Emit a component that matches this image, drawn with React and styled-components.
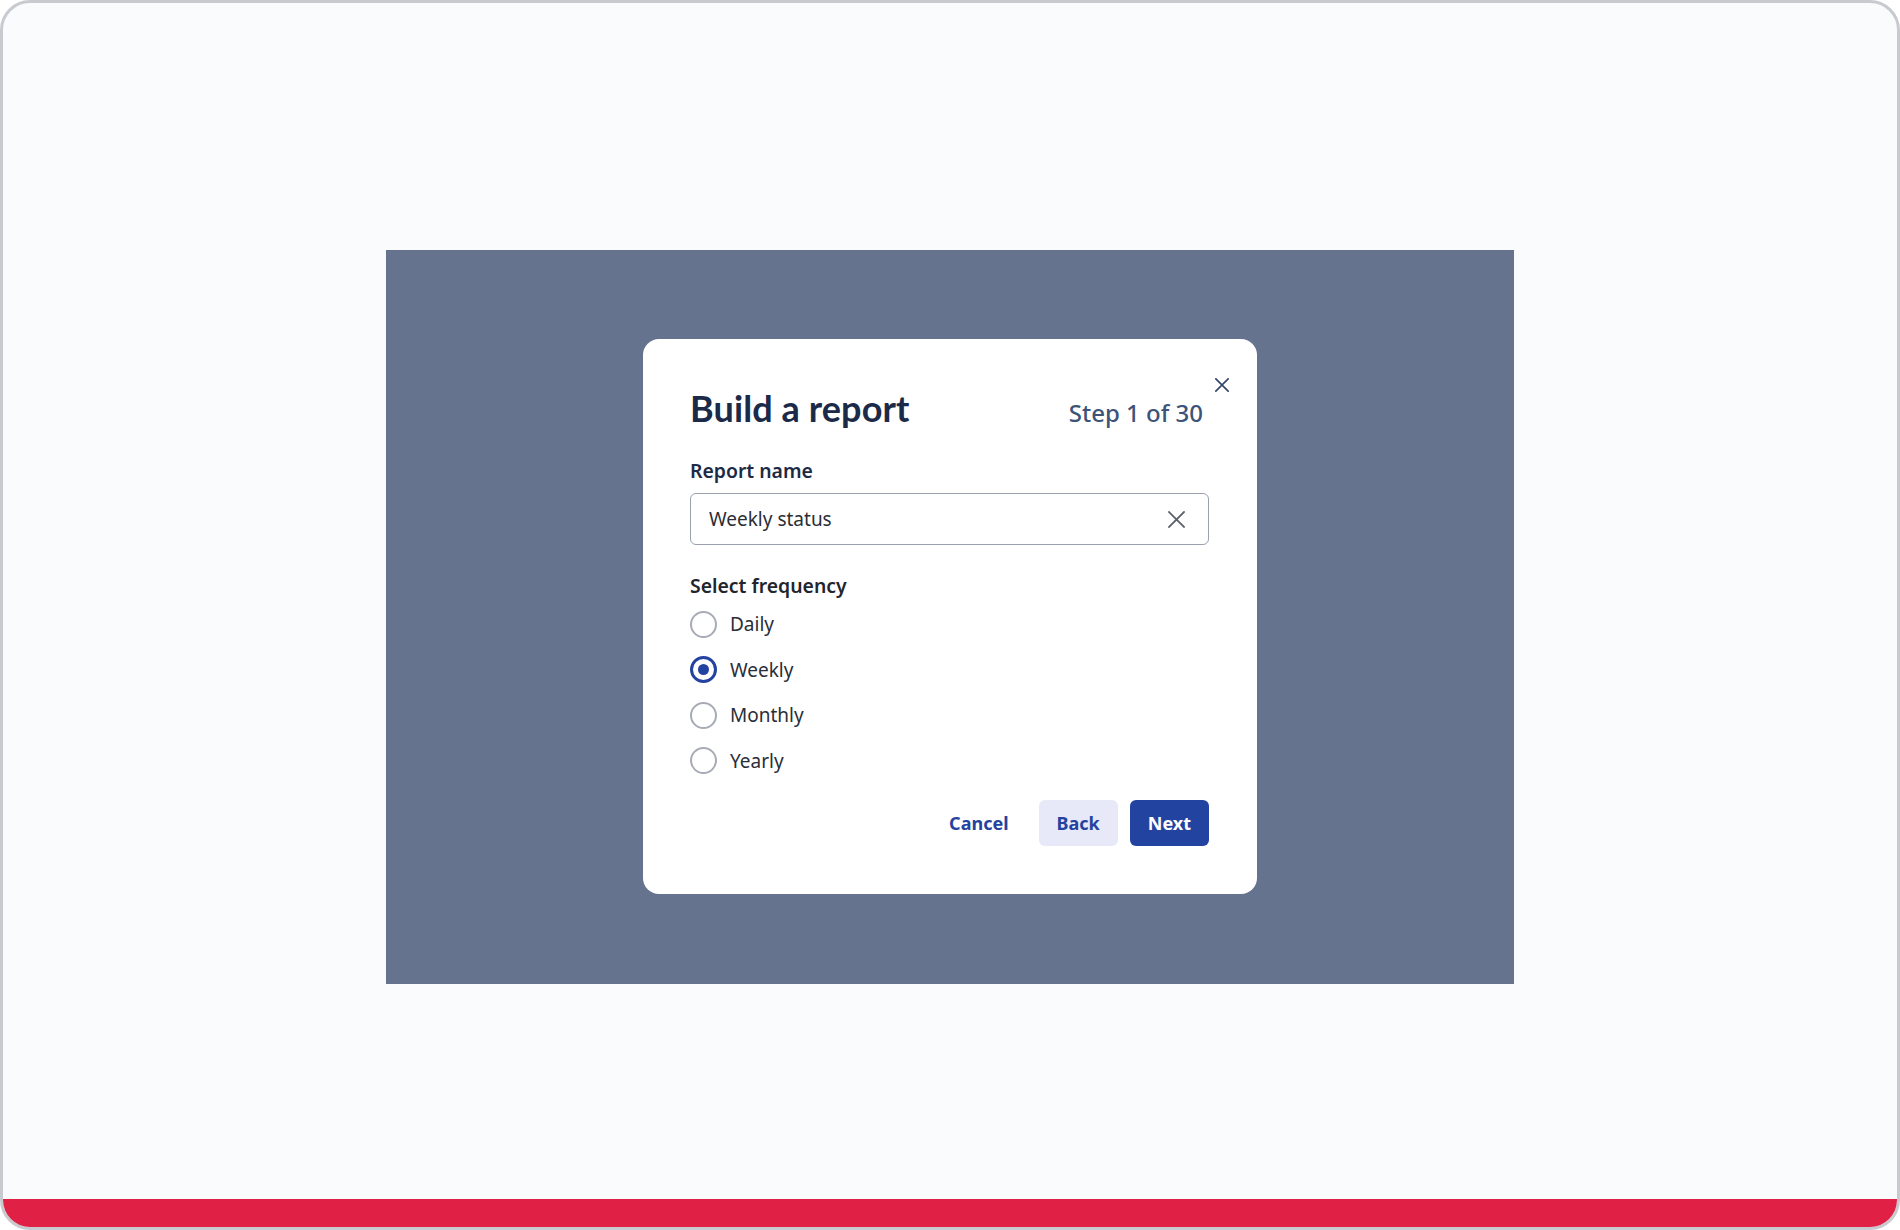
import React, { useState } from "react";
import styled, { createGlobalStyle } from "styled-components";

const GlobalStyle = createGlobalStyle`
  html, body {
    margin: 0;
    padding: 0;
    background: #ffffff;
  }
  * {
    box-sizing: border-box;
  }
`;

// outer device frame
const Frame = styled.div`
  width: 1900px;
  height: 1230px;
  border: 3px solid #c9cad0;
  border-radius: 30px;
  overflow: hidden;
  background: #fafbfd;
  display: flex;
  flex-direction: column;
`;

const Stage = styled.div`
  flex: 1;
  display: flex;
  justify-content: center;
  align-items: flex-start;
  padding-top: 247px;
`;

const BottomBar = styled.div`
  height: 28px;
  background: #e02045;
`;

const Backdrop = styled.div`
  width: 1128px;
  height: 734px;
  background: #65738f;
  display: flex;
  justify-content: center;
  align-items: flex-start;
  padding-top: 89px;
`;

const Dialog = styled.div`
  position: relative;
  width: 614px;
  background: #ffffff;
  border-radius: 16px;
  padding: 47px 48px 48px 47px;
  font-family: "Noto Sans", "Open Sans", sans-serif;
`;

const CloseButton = styled.button`
  position: absolute;
  top: 32px;
  right: 21px;
  width: 28px;
  height: 28px;
  border: none;
  background: transparent;
  padding: 0;
  display: flex;
  align-items: center;
  justify-content: center;
  cursor: pointer;
  color: #34466a;
`;

const Header = styled.div`
  display: flex;
  justify-content: space-between;
  align-items: baseline;
  height: 44px;
`;

const Title = styled.h2`
  margin: 0;
  font-family: Lato, "Noto Sans", sans-serif;
  font-weight: 700;
  font-size: 36px;
  line-height: 44px;
  color: #1b2a48;
  letter-spacing: 0.1px;
`;

const Step = styled.span`
  font-size: 24px;
  line-height: 32px;
  font-weight: 500;
  color: #3d5378;
  margin-right: 6px;
`;

const FieldLabel = styled.div`
  font-size: 19.4px;
  line-height: 24px;
  font-weight: 600;
  color: ${(p) => p.$tone || "#1d2a45"};
  margin-top: ${(p) => p.$top}px;
`;

const InputWrap = styled.div`
  margin-top: 10px;
  height: 52px;
  border: 1.5px solid #9aa0ac;
  border-radius: 6px;
  display: flex;
  align-items: center;
  padding: 0 18px 0 18px;
`;

const TextInput = styled.input`
  flex: 1;
  border: none;
  outline: none;
  background: transparent;
  font-family: "Noto Sans", sans-serif;
  font-size: 19px;
  color: #2b2e35;
  padding: 0;
`;

const ClearButton = styled.button`
  width: 28px;
  height: 28px;
  border: none;
  background: transparent;
  padding: 0;
  display: flex;
  align-items: center;
  justify-content: center;
  color: #5b5f69;
  cursor: pointer;
`;

const RadioList = styled.div`
  margin-top: 13px;
  display: flex;
  flex-direction: column;
  gap: 19.5px;
`;

const RadioRow = styled.label`
  display: flex;
  align-items: center;
  gap: 13px;
  height: 26px;
  cursor: pointer;
  font-size: 19px;
  color: #2a2e38;
`;

const RadioCircle = styled.span`
  width: 27px;
  height: 27px;
  border-radius: 50%;
  border: ${(p) => (p.$checked ? "3px solid #2443a0" : "2.5px solid #a7abb5")};
  display: flex;
  align-items: center;
  justify-content: center;

  &::after {
    content: "";
    width: 11px;
    height: 11px;
    border-radius: 50%;
    background: #2443a0;
    display: ${(p) => (p.$checked ? "block" : "none")};
  }
`;

const Footer = styled.div`
  margin-top: 26px;
  display: flex;
  justify-content: flex-end;
  gap: 12px;
`;

const Button = styled.button`
  height: 46px;
  padding: 0 18px;
  border-radius: 6px;
  border: none;
  font-family: "Noto Sans", sans-serif;
  font-weight: 700;
  font-size: 18px;
  cursor: pointer;
  background: ${(p) =>
    p.$variant === "primary" ? "#2243a0" : p.$variant === "secondary" ? "#e7e9f8" : "transparent"};
  color: ${(p) => (p.$variant === "primary" ? "#ffffff" : "#2443a0")};
`;

const options = ["Daily", "Weekly", "Monthly", "Yearly"];

function Cross({ size, weight }) {
  return (
    <svg width={size} height={size} viewBox="0 0 16 16" fill="none">
      <path d="M1 1L15 15M15 1L1 15" stroke="currentColor" strokeWidth={weight} strokeLinecap="square" />
    </svg>
  );
}

export default function App() {
  const [name, setName] = useState("Weekly status");
  const [freq, setFreq] = useState("Weekly");

  return (
    <>
      <GlobalStyle />
      <Frame>
        <Stage>
          <Backdrop>
            <Dialog>
              <CloseButton aria-label="Close">
                <Cross size={14} weight={1.9} />
              </CloseButton>
              <Header>
                <Title>Build a report</Title>
                <Step>Step 1 of 30</Step>
              </Header>

              <FieldLabel $top={29}>Report name</FieldLabel>
              <InputWrap>
                <TextInput value={name} onChange={(e) => setName(e.target.value)} />
                <ClearButton aria-label="Clear" onClick={() => setName("")}>
                  <Cross size={17} weight={1.7} />
                </ClearButton>
              </InputWrap>

              <FieldLabel $top={29} $tone="#22252d">Select frequency</FieldLabel>
              <RadioList>
                {options.map((o) => (
                  <RadioRow key={o} onClick={() => setFreq(o)}>
                    <RadioCircle $checked={freq === o} />
                    {o}
                  </RadioRow>
                ))}
              </RadioList>

              <Footer>
                <Button>Cancel</Button>
                <Button $variant="secondary">Back</Button>
                <Button $variant="primary">Next</Button>
              </Footer>
            </Dialog>
          </Backdrop>
        </Stage>
        <BottomBar />
      </Frame>
    </>
  );
}
